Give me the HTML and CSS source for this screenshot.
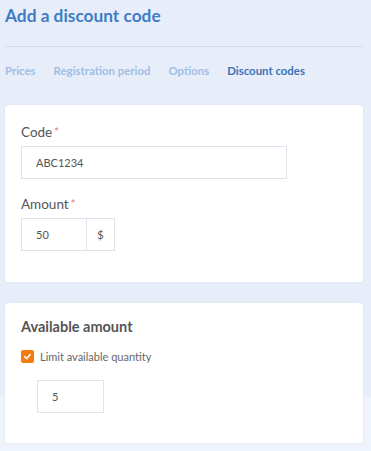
FILE: index.html
```html
<!DOCTYPE html>
<html lang="en">
<head>
    <meta charset="UTF-8">
    <meta name="viewport" content="width=device-width, initial-scale=1.0">
    <title>Add a discount code</title>
    <link rel="stylesheet" href="styles.css">
</head>
<body>
    <div class="page">
        <h1 class="title">Add a discount code</h1>
        <div class="divider"></div>

        <nav class="tabs">
            <a class="tab">Prices</a>
            <a class="tab">Registration period</a>
            <a class="tab">Options</a>
            <a class="tab active">Discount codes</a>
        </nav>

        <div class="card">
            <div class="field">
                <label class="label">Code<span class="req">*</span></label>
                <div class="input wide">ABC1234</div>
            </div>
            <div class="field">
                <label class="label">Amount<span class="req">*</span></label>
                <div class="group">
                    <div class="input amount">50</div>
                    <div class="addon">$</div>
                </div>
            </div>
        </div>

        <div class="card second">
            <h2 class="card-title">Available amount</h2>
            <div class="check-row">
                <span class="checkbox">
                    <svg width="9" height="9" viewBox="0 0 10 10"><path d="M2 5.2 L4.2 7.3 L8 2.8" fill="none" stroke="#fff" stroke-width="1.8" stroke-linecap="round" stroke-linejoin="round"/></svg>
                </span>
                <span class="check-label">Limit available quantity</span>
            </div>
            <div class="input qty">5</div>
        </div>
    </div>
</body>
</html>
```

FILE: styles.css
```css
body { margin: 0; background: linear-gradient(#e8eef9 397px, #eef3fc 397px); min-height: 451px; font-family: Lato, "Noto Sans", sans-serif; }
.page { padding: 0 8px 8px 5px; }

.title { margin: 0; padding-top: 4px; font-size: 17.3px; line-height: 24px; font-weight: 700; color: #3d7cc6; }
.divider { height: 1px; background: #d2dbe8; margin-top: 18px; }

.tabs { display: flex; gap: 18px; margin-top: 17px; height: 14px; line-height: 14px; }
.tab { font-size: 11.4px; font-weight: 700; color: #9fbde5; }
.tab.active { color: #3b71b8; }

.card { background: #fff; border-radius: 4px; margin-top: 27px; padding: 19px 16px 31px 16px; box-shadow: 0 0 2px rgba(150, 170, 210, 0.25); }
.card.second { margin-top: 21px; padding: 14px 16px 30px 16px; }

.field { margin-bottom: 17px; }
.field:last-child { margin-bottom: 0; }
.label { display: block; font-size: 13.5px; color: #555; line-height: 16px; margin-bottom: 6px; }
.req { color: #f26d6d; font-size: 11px; vertical-align: top; margin-left: 2px; }

.input { box-sizing: border-box; height: 33px; line-height: 31px; border: 1px solid #dfe4ec; padding-left: 14px; font-size: 11px; color: #555; background: #fff; }
.input.wide { width: 266px; }

.group { display: flex; }
.input.amount { width: 66px; }
.addon { box-sizing: border-box; height: 33px; line-height: 31px; width: 28px; border: 1px solid #dfe4ec; border-left: none; text-align: center; font-size: 11px; color: #555; }

.card-title { margin: 0; font-size: 14.5px; line-height: 20px; font-weight: 700; color: #555; }

.check-row { display: flex; align-items: center; gap: 6px; margin-top: 13px; }
.checkbox { width: 13px; height: 13px; border-radius: 2px; background: #f47c0c; display: flex; align-items: center; justify-content: center; }
.check-label { font-size: 11px; color: #666; }

.input.qty { width: 67px; margin: 17px 0 0 16px; }
```
